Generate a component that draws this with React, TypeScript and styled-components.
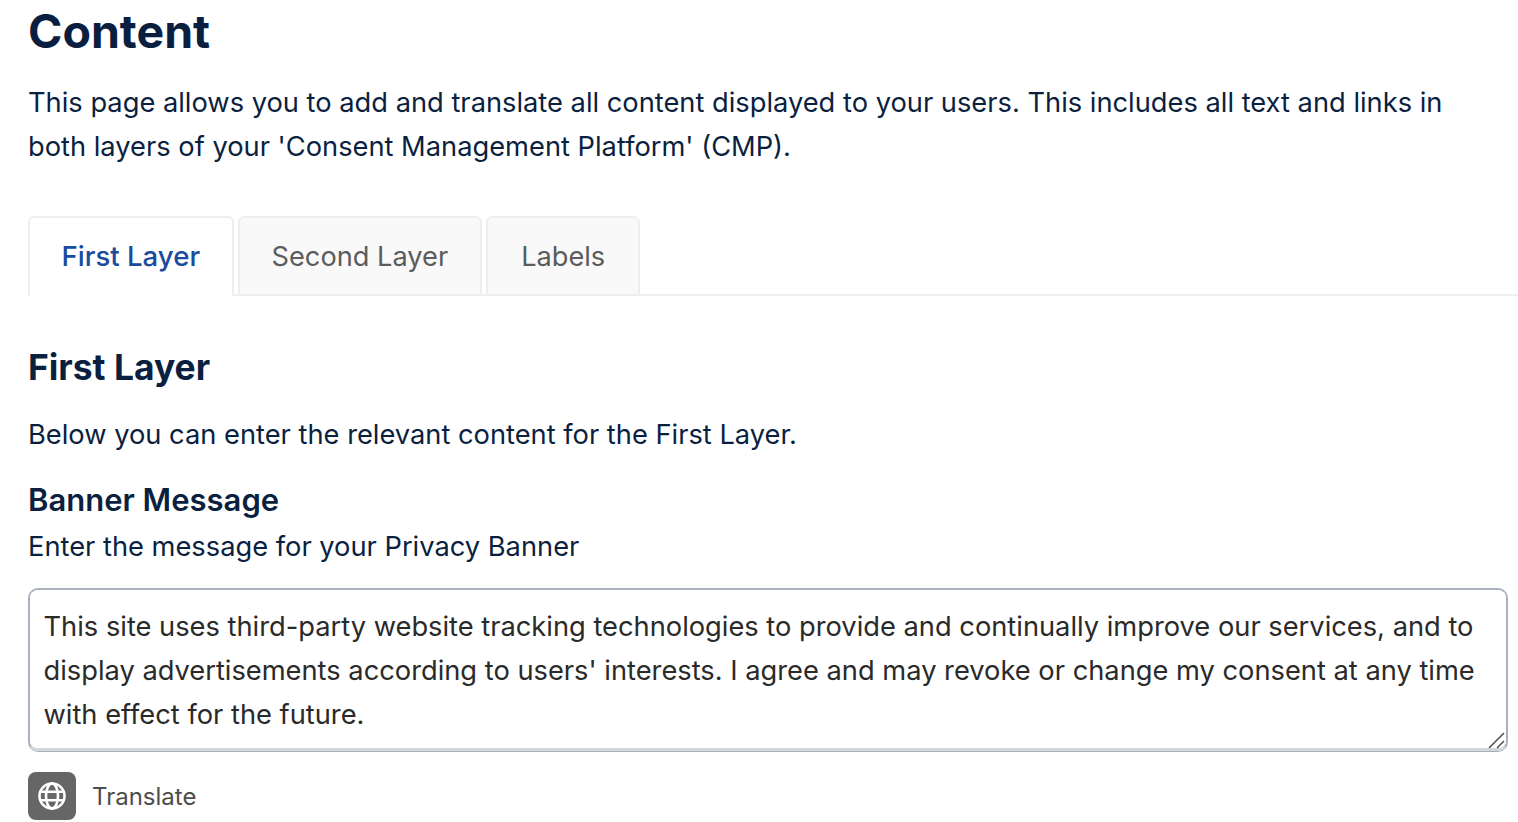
import React from 'react';
import styled, { createGlobalStyle } from 'styled-components';

const GlobalStyle = createGlobalStyle`
  html, body {
    margin: 0;
    padding: 0;
    height: 100%;
    overflow: hidden;
    background: #fff;
  }
  body {
    font-family: Inter, "Liberation Sans", sans-serif;
    color: #0b1f3f;
  }
`;

const Page = styled.div`
  padding: 0 10px 0 28px;
`;

const Title = styled.h1`
  margin: 0;
  font-size: 46.5px;
  line-height: 62px;
  font-weight: 700;
  color: #0a1e3f;
`;

const Intro = styled.p`
  margin: 19px 0 0;
  padding-right: 60px;
  font-size: 27.27px;
  line-height: 44px;
  font-weight: 400;
`;

const TabBar = styled.div`
  display: flex;
  gap: 4px;
  margin: 47px -10px 0 0;
  border-bottom: 2px solid #eeeeee;
  height: 78px;
`;

const Tab = styled.div<{ $active?: boolean }>`
  display: flex;
  align-items: center;
  padding: ${p => (p.$active ? '0 31.5px 2px' : '0 32px')};
  height: 80px;
  box-sizing: border-box;
  font-size: ${p => (p.$active ? '27.6px' : '27.2px')};
  font-weight: ${p => (p.$active ? 500 : 400)};
  color: ${p => (p.$active ? '#1a4b9c' : '#5c5c5c')};
  background: ${p => (p.$active ? '#fff' : '#f9f9f9')};
  border: 2px solid #eeeeee;
  border-bottom: ${p => (p.$active ? 'none' : '2px solid #eeeeee')};
  border-radius: 6px 6px 0 0;

  &:last-child {
    padding: 0 33px;
  }
`;

const SectionTitle = styled.h2`
  margin: 48px 0 0;
  font-size: 35.4px;
  line-height: 48px;
  font-weight: 700;
`;

const Text = styled.p`
  margin: 21px 0 0;
  font-size: 27.27px;
  line-height: 44px;
`;

const FieldTitle = styled.h3`
  margin: 21px 0 0;
  font-size: 31px;
  line-height: 44px;
  font-weight: 600;
`;

const FieldHint = styled.p`
  margin: 3px 0 0;
  font-size: 27.27px;
  line-height: 44px;
`;

const MessageWrap = styled.div`
  position: relative;
  margin-top: 19px;
`;

const MessageBox = styled.textarea`
  display: block;
  width: 100%;
  height: 163px;
  margin: 0;
  padding: 15px 14px 15px 13.5px;
  box-sizing: border-box;
  font-family: inherit;
  font-size: 27.27px;
  line-height: 44px;
  color: #2a2a2a;
  border: 2px solid #a9afbc;
  border-bottom-width: 3px;
  border-bottom-color: #d3d6dc;
  border-radius: 10px;
  box-shadow: 0 1px 0 #a9afbc;
  outline: none;
  resize: none;
`;

const ResizeGrip = styled.svg`
  position: absolute;
  right: 2px;
  bottom: 2px;
  width: 18px;
  height: 18px;
`;

const TranslateRow = styled.div`
  display: flex;
  align-items: center;
  gap: 16px;
  margin-top: 21px;
`;

const TranslateButton = styled.div`
  display: flex;
  align-items: center;
  justify-content: center;
  width: 48px;
  height: 48px;
  border-radius: 8px;
  background: #666666;
`;

const TranslateLabel = styled.span`
  font-size: 24px;
  color: #4d4d4d;
`;

const GlobeIcon = () => (
  <svg width="28" height="28" viewBox="0 0 28 28" fill="none" stroke="#fff" strokeWidth="2.6">
    <circle cx="14" cy="14" r="12.5" />
    <ellipse cx="14" cy="14" rx="6" ry="12.5" />
    <path d="M3 9.7h22M3 18.3h22" />
  </svg>
);

export default function App() {
  return (
    <Page>
      <GlobalStyle />
      <Title>Content</Title>
      <Intro>
        This page allows you to add and translate all content displayed to your users. This includes all text and links in both layers of your 'Consent Management Platform' (CMP).
      </Intro>
      <TabBar>
        <Tab $active>First Layer</Tab>
        <Tab>Second Layer</Tab>
        <Tab>Labels</Tab>
      </TabBar>
      <SectionTitle>First Layer</SectionTitle>
      <Text>Below you can enter the relevant content for the First Layer.</Text>
      <FieldTitle>Banner Message</FieldTitle>
      <FieldHint>Enter the message for your Privacy Banner</FieldHint>
      <MessageWrap>
        <MessageBox
          readOnly
          defaultValue="This site uses third-party website tracking technologies to provide and continually improve our services, and to display advertisements according to users' interests. I agree and may revoke or change my consent at any time with effect for the future."
        />
        <ResizeGrip viewBox="0 0 18 18" fill="none" stroke="#555" strokeWidth="1.6">
          <path d="M1 17 16 2M9 17l7-7" />
        </ResizeGrip>
      </MessageWrap>
      <TranslateRow>
        <TranslateButton>
          <GlobeIcon />
        </TranslateButton>
        <TranslateLabel>Translate</TranslateLabel>
      </TranslateRow>
    </Page>
  );
}
